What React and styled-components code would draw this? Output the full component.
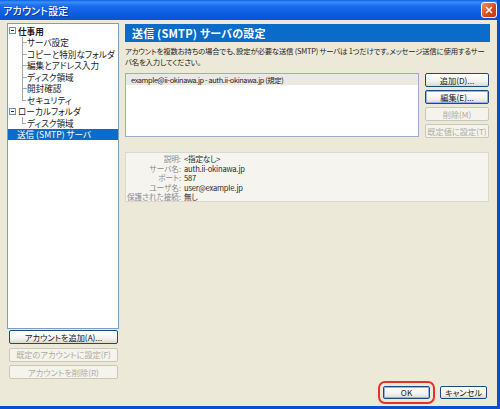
import React from "react";
import styled, { createGlobalStyle, css } from "styled-components";

const GlobalStyle = createGlobalStyle`
  html, body {
    margin: 0;
    padding: 0;
    width: 500px;
    height: 409px;
    overflow: hidden;
    background: #ece9d8;
  }
  body {
    font-family: "Noto Sans CJK JP", "Noto Sans", sans-serif;
    font-feature-settings: "palt";
    color: #1a1a1a;
  }
`;

const Window = styled.div`
  width: 497px;
  height: 406px;
  display: flex;
  flex-direction: column;
  background: #ece9d8;
  border-right: 3px solid #0a4fd0;
  border-bottom: 3px solid #0a4fd0;
`;

const TitleBar = styled.div`
  height: 20px;
  flex: none;
  display: flex;
  align-items: center;
  justify-content: space-between;
  padding: 0 0 0 3px;
  background: linear-gradient(
    #0a5fe2 0%,
    #3b8ef9 10%,
    #1a6cec 30%,
    #0c5ce0 70%,
    #0a52d2 100%
  );
`;

const Title = styled.span`
  color: #fff;
  font-size: 10px;
  font-weight: 500;
  letter-spacing: 0.2px;
  text-shadow: 1px 1px 0 #0a3a9c;
`;

const CloseButton = styled.span`
  width: 14px;
  height: 14px;
  border: 1px solid #fff;
  border-radius: 3px;
  background: linear-gradient(135deg, #f0906a, #d8461c 60%, #c23a12);
  display: flex;
  align-items: center;
  justify-content: center;
`;

const Main = styled.div`
  height: 356px;
  margin-top: 3px;
  padding-left: 7px;
  display: flex;
  gap: 6px;
`;

const LeftColumn = styled.div`
  width: 112px;
  display: flex;
  flex-direction: column;
`;

const TreeBox = styled.div`
  height: 308px;
  box-sizing: border-box;
  border: 1px solid #7f9db9;
  background: #fff;
  padding-top: 1px;
`;

const TreeRow = styled.div`
  height: 11.5px;
  display: flex;
  align-items: center;
  font-size: 8.6px;
  white-space: nowrap;
  font-weight: ${(p) => (p.$bold ? 700 : 400)};
  padding-left: ${(p) => (p.$child ? 14 : 1)}px;
  ${(p) =>
    p.$selected &&
    css`
      background: #0b6bc8;
      color: #fff;
      padding-left: 9px;
    `}
`;

const Connector = styled.span`
  position: relative;
  width: 4px;
  height: 100%;
  margin-right: 1px;
  border-left: 1px solid #a8a8a8;
  box-sizing: border-box;
  ${(p) =>
    p.$last &&
    css`
      border-left: none;
      &::before {
        content: "";
        position: absolute;
        left: 0;
        top: 0;
        height: 50%;
        border-left: 1px solid #a8a8a8;
      }
    `}
  &::after {
    content: "";
    position: absolute;
    left: 0;
    top: 50%;
    width: 4px;
    border-top: 1px solid #a8a8a8;
  }
`;

const Expander = styled.span`
  position: relative;
  width: 7px;
  height: 7px;
  margin-right: 2px;
  border: 1px solid #6f8fb0;
  box-sizing: border-box;
  background: #fff;
  &::after {
    content: "";
    position: absolute;
    left: 1px;
    right: 1px;
    top: 2px;
    border-top: 1px solid #2a2a2a;
  }
`;

const LeftButtons = styled.div`
  display: flex;
  flex-direction: column;
  gap: 3.5px;
  margin: 1px 1px 0 2px;
`;

const Button = styled.button`
  height: 14px;
  padding: 0;
  font-family: inherit;
  font-feature-settings: "palt";
  font-size: 8.2px;
  line-height: 1;
  border-radius: 2px;
  color: #1a1a1a;
  border: 1px solid #1c4a80;
  background: linear-gradient(#ffffff, #f4f3ee 60%, #dcd9cc);
  box-sizing: border-box;
  white-space: nowrap;
  ${(p) =>
    p.$focused &&
    css`
      box-shadow: inset 0 0 0 1px #8cb4f2;
    `}
  ${(p) =>
    p.disabled &&
    css`
      color: #b0ad9f;
      border-color: #cbc8bb;
      background: #f4f3ec;
    `}
`;

const RightColumn = styled.div`
  width: 365px;
  display: flex;
  flex-direction: column;
  padding-top: 1px;
`;

const Header = styled.div`
  height: 18px;
  background: #0b6bc8;
  color: #fff;
  font-size: 11px;
  font-weight: 700;
  display: flex;
  align-items: center;
  padding-left: 7px;
  letter-spacing: 0.2px;
`;

const Description = styled.p`
  margin: 3px 0 0;
  font-size: 7.4px;
  letter-spacing: -0.2px;
  line-height: 11px;
  white-space: nowrap;
  color: #222;
`;

const ListRow = styled.div`
  margin-top: 6px;
  display: flex;
  gap: 6px;
`;

const ListBox = styled.div`
  width: 294px;
  height: 64px;
  box-sizing: border-box;
  border: 1px solid #9aaec6;
  background: #fff;
`;

const ListItem = styled.div`
  height: 11px;
  display: flex;
  align-items: center;
  padding-left: 5px;
  font-size: 7.4px;
  letter-spacing: -0.4px;
  background: #ebe9e2;
  color: #222;
  white-space: nowrap;
`;

const SideButtons = styled.div`
  width: 64px;
  display: flex;
  flex-direction: column;
  gap: 3px;
`;

const Details = styled.div`
  margin-top: 14px;
  width: 364px;
  height: 50px;
  box-sizing: border-box;
  padding: 1px 0;
  border: 1px solid #dad8cf;
  background: #f5f4ef;
  display: grid;
  grid-template-columns: 55px 1fr;
  column-gap: 3px;
  align-content: start;
  font-size: 7.6px;
  line-height: 9.6px;
`;

const Label = styled.span`
  text-align: right;
  color: #8a8a8a;
  white-space: nowrap;
`;

const Value = styled.span`
  color: #2a2a2a;
  white-space: nowrap;
  letter-spacing: -0.2px;
`;

const Footer = styled.div`
  margin-top: 3px;
  height: 21px;
  display: flex;
  align-items: center;
  justify-content: flex-end;
  gap: 5px;
  padding-right: 10px;
`;

const Highlight = styled.div`
  padding: 3px;
  border: 2px solid #e8302a;
  border-radius: 7px;
  display: flex;
`;

const FooterButton = styled(Button)`
  width: 47px;
  height: 13px;
`;

const tree = [
  { label: "仕事用", bold: true, expander: true },
  { label: "サーバ設定", child: true },
  { label: "コピーと特別なフォルダ", child: true },
  { label: "編集とアドレス入力", child: true },
  { label: "ディスク領域", child: true },
  { label: "開封確認", child: true },
  { label: "セキュリティ", child: true, last: true },
  { label: "ローカルフォルダ", expander: true },
  { label: "ディスク領域", child: true, last: true },
  { label: "送信 (SMTP) サーバ", selected: true },
];

const details = [
  ["説明:", "<指定なし>"],
  ["サーバ名:", "auth.ii-okinawa.jp"],
  ["ポート:", "587"],
  ["ユーザ名:", "user@example.jp"],
  ["保護された接続:", "無し"],
];

const App = () => (
  <>
    <GlobalStyle />
    <Window>
      <TitleBar>
        <Title>アカウント設定</Title>
        <CloseButton>
          <svg width="8" height="8" viewBox="0 0 8 8">
            <path d="M1 1 L7 7 M7 1 L1 7" stroke="#fff" strokeWidth="1.6" />
          </svg>
        </CloseButton>
      </TitleBar>
      <Main>
        <LeftColumn>
          <TreeBox>
            {tree.map((item, i) => (
              <TreeRow
                key={i}
                $bold={item.bold}
                $child={item.child}
                $selected={item.selected}
              >
                {item.expander && <Expander />}
                {item.child && <Connector $last={item.last} />}
                {item.label}
              </TreeRow>
            ))}
          </TreeBox>
          <LeftButtons>
            <Button>アカウントを追加(A)...</Button>
            <Button disabled>既定のアカウントに設定(F)</Button>
            <Button disabled>アカウントを削除(R)</Button>
          </LeftButtons>
        </LeftColumn>
        <RightColumn>
          <Header>送信 (SMTP) サーバの設定</Header>
          <Description>
            アカウントを複数お持ちの場合でも、設定が必要な送信 (SMTP) サーバは
            1つだけです。メッセージ送信に使用するサー
            <br />
            バ名を入力してください。
          </Description>
          <ListRow>
            <ListBox>
              <ListItem>
                example@ii-okinawa.jp - auth.ii-okinawa.jp (規定)
              </ListItem>
            </ListBox>
            <SideButtons>
              <Button>追加(D)...</Button>
              <Button $focused>編集(E)...</Button>
              <Button disabled>削除(M)</Button>
              <Button disabled>既定値に設定(T)</Button>
            </SideButtons>
          </ListRow>
          <Details>
            {details.map(([label, value]) => (
              <React.Fragment key={label}>
                <Label>{label}</Label>
                <Value>{value}</Value>
              </React.Fragment>
            ))}
          </Details>
        </RightColumn>
      </Main>
      <Footer>
        <Highlight>
          <FooterButton $focused>OK</FooterButton>
        </Highlight>
        <FooterButton>キャンセル</FooterButton>
      </Footer>
    </Window>
  </>
);

export default App;
